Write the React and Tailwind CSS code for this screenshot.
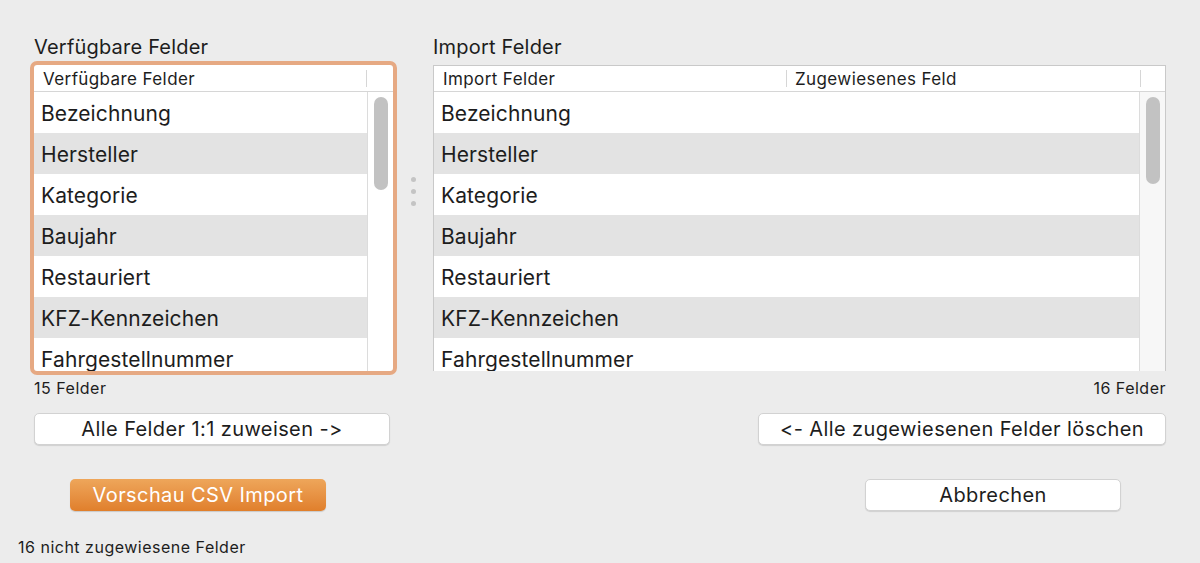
const fields = [
  'Bezeichnung',
  'Hersteller',
  'Kategorie',
  'Baujahr',
  'Restauriert',
  'KFZ-Kennzeichen',
  'Fahrgestellnummer',
];

function Rows() {
  return (
    <div className="flex-1 min-w-0 h-[279px] overflow-hidden">
      {fields.map((f, i) => (
        <div
          key={f}
          className={`h-[41px] flex items-center pl-[7px] pt-[2px] text-[21px] tracking-[0.1px] text-[#1d1d1d] ${
            i % 2 ? 'bg-[#e3e3e3]' : 'bg-white'
          }`}
        >
          {f}
        </div>
      ))}
    </div>
  );
}

function Scroll({ track, thumbH }) {
  return (
    <div className={`w-[26px] h-[279px] border-l border-[#dcdcdc] pt-[5px] flex justify-center ${track}`}>
      <div className={`w-[14px] rounded-full bg-[#c2c2c2] ${thumbH}`} />
    </div>
  );
}

export default function App() {
  return (
    <div
      className="w-[1200px] h-[563px] bg-[#ececec] text-[#1d1d1d] relative overflow-hidden [font-feature-settings:'calt'_0]"
      style={{ fontFamily: 'Inter, "Noto Sans", sans-serif' }}
    >
      <div className="pl-[34px] pt-[35px] flex">
        {/* left */}
        <div className="w-[359px] flex flex-col">
          <div className="text-[20px] leading-[24px] h-[30px] tracking-[0.2px]">Verfügbare Felder</div>
          <div className="h-[306px] bg-white outline-4 outline-[#e6a983] rounded-[3px] flex flex-col">
            <div className="h-[27px] flex items-center border-b border-[#d6d6d6] text-[17px] tracking-[0.4px]">
              <div className="flex-1 pl-[9px] pt-[3px]">Verfügbare Felder</div>
              <div className="w-[27px] h-[17px] border-l border-[#d6d6d6]" />
            </div>
            <div className="flex">
              <Rows />
              <Scroll track="bg-white" thumbH="h-[93px]" />
            </div>
          </div>
          <div className="text-[16px] leading-[18px] mt-[8px] tracking-[0.5px]">15 Felder</div>
          <button className="mt-[16px] w-[356px] h-[32px] bg-white rounded-[5px] border border-[#d2d2d2] shadow-[0_1px_1px_rgba(0,0,0,0.12)] text-[20px] tracking-[0.4px]">
            Alle Felder 1:1 zuweisen -&gt;
          </button>
        </div>

        {/* divider */}
        <div className="w-[40px] flex flex-col items-center pt-[142px] gap-[7px]">
          <span className="w-[5px] h-[5px] rounded-full bg-[#c4c4c4]" />
          <span className="w-[5px] h-[5px] rounded-full bg-[#c4c4c4]" />
          <span className="w-[5px] h-[5px] rounded-full bg-[#c4c4c4]" />
        </div>

        {/* right */}
        <div className="w-[733px] flex flex-col">
          <div className="text-[20px] leading-[24px] h-[30px] tracking-[0.2px]">Import Felder</div>
          <div className="h-[306px] bg-white border border-[#c9c9c9] flex flex-col">
            <div className="h-[26px] flex items-center border-b border-[#d6d6d6] text-[17px] tracking-[0.4px]">
              <div className="w-[352px] pl-[9px] pt-[3px]">Import Felder</div>
              <div className="w-[354px] h-[17px] border-l border-[#d6d6d6] pl-[8px] flex items-center pt-[3px]">
                Zugewiesenes Feld
              </div>
              <div className="flex-1 h-[17px] border-l border-[#d6d6d6]" />
            </div>
            <div className="flex">
              <Rows />
              <Scroll track="bg-[#f7f7f7]" thumbH="h-[87px]" />
            </div>
          </div>
          <div className="text-[16px] leading-[18px] mt-[8px] text-right tracking-[0.5px]">16 Felder</div>
          <button className="mt-[16px] ml-auto w-[408px] h-[32px] bg-white rounded-[5px] border border-[#d2d2d2] shadow-[0_1px_1px_rgba(0,0,0,0.12)] text-[20px] tracking-[0.4px]">
            &lt;- Alle zugewiesenen Felder löschen
          </button>
        </div>
      </div>

      <div className="flex mt-[34px]">
        <button className="ml-[70px] w-[256px] h-[32px] rounded-[5px] bg-gradient-to-b from-[#eea65a] to-[#e07f2b] text-white text-[20px] tracking-[0.4px] shadow-[0_1px_1px_rgba(0,0,0,0.15)]">
          Vorschau CSV Import
        </button>
        <button className="ml-[539px] w-[256px] h-[32px] bg-white rounded-[5px] border border-[#d2d2d2] shadow-[0_1px_1px_rgba(0,0,0,0.12)] text-[20px] tracking-[0.4px]">
          Abbrechen
        </button>
      </div>

      <div className="pl-[18px] mt-[26px] text-[16px] leading-[20px] tracking-[0.5px]">16 nicht zugewiesene Felder</div>
    </div>
  );
}
